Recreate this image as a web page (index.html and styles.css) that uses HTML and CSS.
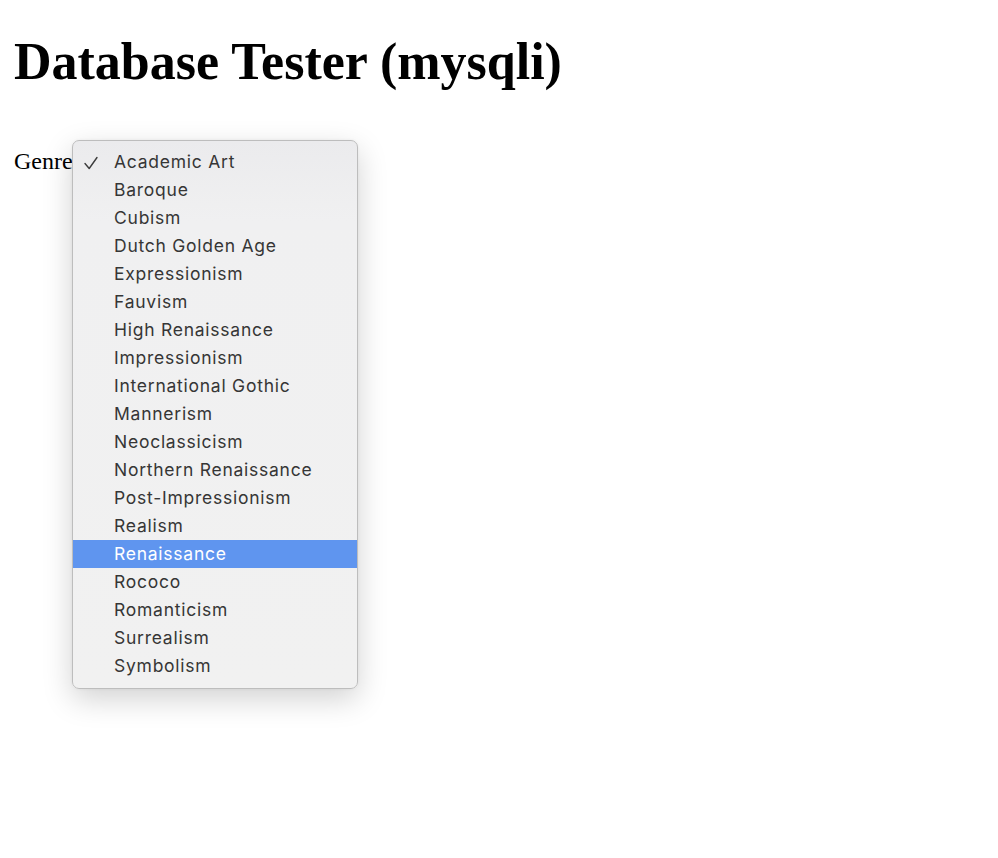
FILE: index.html
```html
<!DOCTYPE html>
<html>
<head>
<meta charset="utf-8">
<link rel="stylesheet" href="styles.css">
</head>
<body>
<h1 class="title">Database Tester (mysqli)</h1>
<div class="field">
  <span class="label">Genre:</span>
  <div class="menu">
    <div class="item checked"><svg class="check" width="16" height="16" viewBox="0 0 16 16"><path d="M2 8.5 L6.2 13.5 L14 2.5" fill="none" stroke="#3c3c3c" stroke-width="1.4" stroke-linecap="round" stroke-linejoin="round"/></svg>Academic Art</div>
    <div class="item">Baroque</div>
    <div class="item">Cubism</div>
    <div class="item">Dutch Golden Age</div>
    <div class="item">Expressionism</div>
    <div class="item">Fauvism</div>
    <div class="item">High Renaissance</div>
    <div class="item">Impressionism</div>
    <div class="item">International Gothic</div>
    <div class="item">Mannerism</div>
    <div class="item">Neoclassicism</div>
    <div class="item">Northern Renaissance</div>
    <div class="item">Post-Impressionism</div>
    <div class="item">Realism</div>
    <div class="item active">Renaissance</div>
    <div class="item">Rococo</div>
    <div class="item">Romanticism</div>
    <div class="item">Surrealism</div>
    <div class="item">Symbolism</div>
  </div>
</div>
</body>
</html>
```
FILE: styles.css
```css
html, body { margin: 0; padding: 0; background: #fff; }
body {
  min-height: 858px;
  box-sizing: border-box;
  padding: 0 14px;
  font-family: "Liberation Serif", "DejaVu Serif", serif;
  color: #000;
}
.title {
  margin: 0;
  padding-top: 32px;
  font-size: 52px;
  line-height: 60px;
  font-weight: bold;
  letter-spacing: 0;
}
.field {
  position: relative;
  margin-top: 55px;
  font-size: 24px;
  line-height: 28px;
}
.menu {
  position: absolute;
  left: 58px;
  top: -7px;
  width: 284px;
  padding: 7px 0 8px;
  background: linear-gradient(#ebebed 0, #f0f0f1 80px, #f1f1f1 100%);
  border: 1px solid #bdbdbd;
  border-radius: 7px;
  box-shadow: 0 10px 30px rgba(0,0,0,0.18), 0 0 3px rgba(0,0,0,0.06);
  font-family: Inter, "Noto Sans", sans-serif;
  font-size: 17.5px;
  color: #363636;
}
.item {
  position: relative;
  height: 28px;
  line-height: 28px;
  padding-left: 41px;
  letter-spacing: 0.75px;
}
.check {
  position: absolute;
  left: 10px;
  top: 7px;
}
.item.active {
  background: #5f95ef;
  color: #fff;
}
```
